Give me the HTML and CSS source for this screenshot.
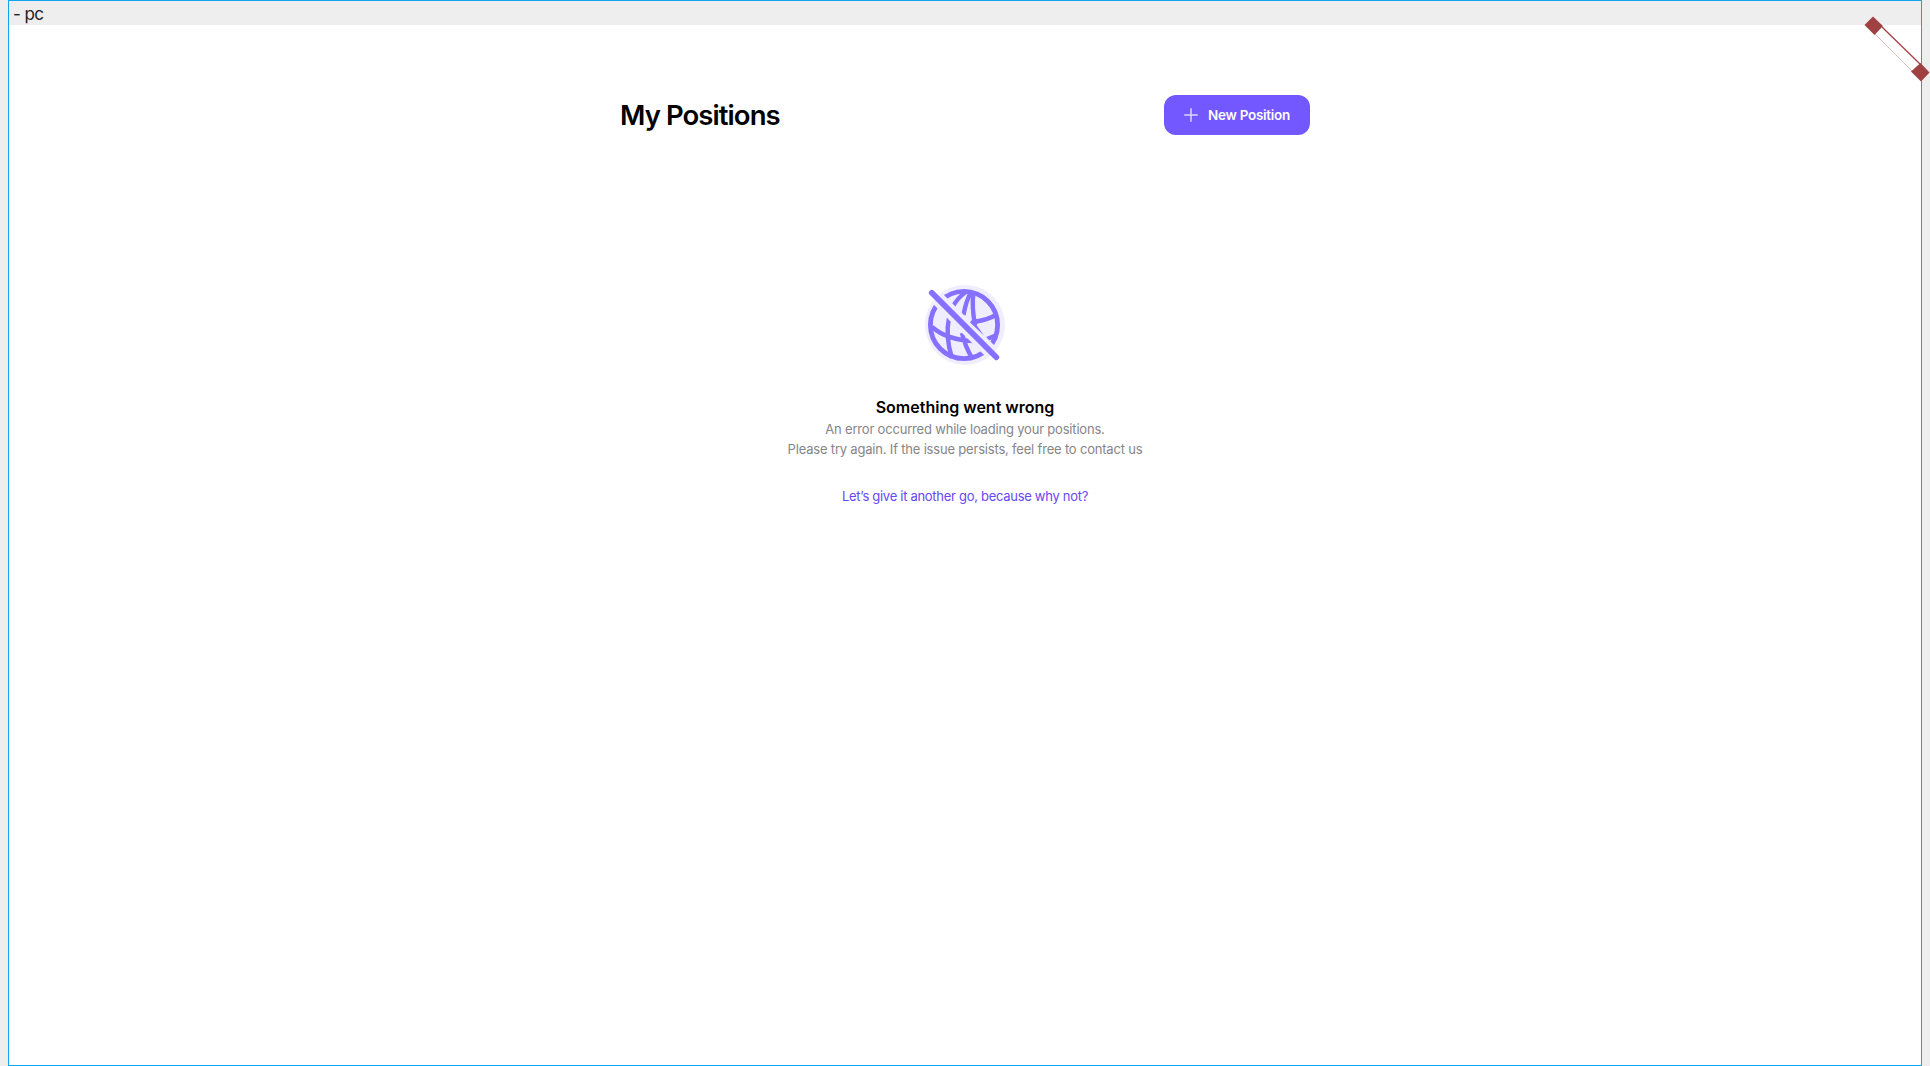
FILE: index.html
```html
<!DOCTYPE html>
<html lang="en">
<head>
<meta charset="utf-8">
<title>My Positions</title>
<link rel="stylesheet" href="styles.css">
</head>
<body>
<div class="frame">
  <div class="frame-label"><span>- pc</span></div>
  <main class="page">
    <header class="page-header">
      <h1>My Positions</h1>
      <button class="new-position" type="button">
        <svg width="14" height="14" viewBox="0 0 14 14"><path d="M7 .2v13.6M.2 7h13.6" stroke="#fff" stroke-opacity=".75" stroke-width="1.5"/></svg>
        <span>New Position</span>
      </button>
    </header>
    <section class="error">
      <svg class="globe" width="100" height="100" viewBox="0 0 100 100" fill="none" stroke="#8570ff" stroke-width="4.8">
        <defs>
          <mask id="gap" maskUnits="userSpaceOnUse" x="0" y="0" width="100" height="100">
            <path d="M0 0h100v100H0z" fill="#fff" stroke="none"/>
            <path d="M5 6l90 90" stroke="#000" stroke-width="14"/>
          </mask>
        </defs>
        <circle cx="50" cy="50" r="40" fill="#f0edff" stroke="none"/>
        <g mask="url(#gap)">
          <circle cx="49" cy="50" r="33.6"/>
          <path stroke-width="4.4" d="M51 17Q43 22 37 33M56 17Q51 26 48.500 40M58.500 17Q56.500 32 60 50M81 40Q72 45 61 46.500M17 52Q32 65 58 66M34 43Q30 61 37 83M47 58Q50 71 57 83M72 64L82 60"/>
        </g>
        <path d="M58 43.500L64 46.500L61.500 50L69 60.500L55 47.500Z" fill="#8570ff" stroke="none"/>
        <path d="M16.800 17.800l64.500 64.500" stroke-width="5.800" stroke-linecap="round"/>
      </svg>
      <h2>Something went wrong</h2>
      <p><span class="line-one">An error occurred while loading your positions.</span><br><span class="line-two">Please try again. If the issue persists, feel free to contact us</span></p>
      <a class="retry">Let’s give it another go, because why not?</a>
    </section>
  </main>
</div>
<svg class="ribbon" width="90" height="100" viewBox="0 0 90 100">
  <path d="M42 27L80 64" stroke="#a64044" stroke-width="1.300"/>
  <path d="M35 34L72 71" stroke="#d9bcbc" stroke-width="1"/>
  <path d="M42 41l5-5M49 48l5-5M56 55l6-6M64 63l6-6" stroke="#f6eeee" stroke-width=".6"/>
  <path d="M33 16.500L43 26L34.500 35L24.500 25ZM80.500 63L89.500 72.500L81 81.500L71 71.500Z" fill="#a04141"/>
</svg>
</body>
</html>
```
FILE: styles.css
```css
* { box-sizing: border-box; }
body {
  margin: 0;
  padding: 0 8px;
  height: 1066px;
  overflow: hidden;
  background: #eee;
  color: #000;
  font-family: Inter, "Liberation Sans", sans-serif;
}
.frame {
  height: 1066px;
  border: 1px solid #0fa5f0;
  background: #fff;
}
.frame-label {
  height: 24px;
  padding: 2px 0 0 4px;
  background: #eee;
  color: #222;
  font-size: 17px;
  line-height: 22px;
  letter-spacing: -0.6px;
}
.page {
  width: 690px;
  margin: 0 auto;
  padding-top: 70px;
}
.page-header {
  display: flex;
  align-items: center;
  justify-content: space-between;
  height: 40px;
}
h1 {
  margin: 0;
  font-size: 27.5px;
  line-height: 39px;
  font-weight: 600;
  letter-spacing: -0.93px;
}
.new-position {
  display: flex;
  align-items: center;
  gap: 10px;
  width: 146px;
  height: 40px;
  padding: 0 0 0 20px;
  border: 0;
  border-radius: 12px;
  background: #7357ff;
  color: #fff;
  font: 600 13.5px/20px Inter, "Liberation Sans", sans-serif;
  letter-spacing: -0.28px;
  white-space: nowrap;
}
.error {
  display: flex;
  flex-direction: column;
  align-items: center;
  padding-top: 140px;
  text-align: center;
}
.globe { display: block; }
h2 {
  margin: 22px 0 0;
  font-size: 16px;
  line-height: 20px;
  font-weight: 600;
}
p {
  margin: 2px 0 0;
  color: #858589;
  font-size: 13px;
  line-height: 20px;
  letter-spacing: -0.19px;
  white-space: nowrap;
}
.retry {
  margin-top: 27px;
  color: #6847f5;
  font-size: 13px;
  line-height: 20px;
  letter-spacing: -0.29px;
}
.ribbon {
  position: absolute;
  top: 0;
  left: 1840px;
}
```
